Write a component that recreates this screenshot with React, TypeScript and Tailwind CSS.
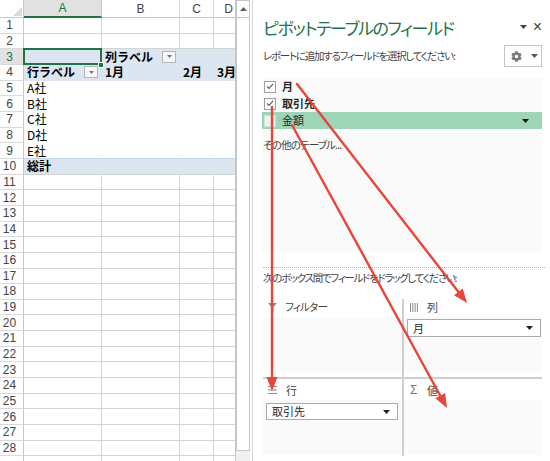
import React from "react";
import { FaCog } from "react-icons/fa";

const JP = "font-['Noto_Sans_CJK_JP','Noto_Sans',sans-serif]";

function Tri({ className = "" }: { className?: string }) {
  return (
    <svg width="7" height="4" viewBox="0 0 7 4" className={className}>
      <polygon points="0,0 7,0 3.5,4" fill="currentColor" />
    </svg>
  );
}

function FilterBtn() {
  return (
    <div className="ml-[9px] w-[14px] h-[12px] border border-[#b5b5b5] bg-[#f7f7f7] flex items-center justify-center text-[#777]">
      <svg width="5" height="3" viewBox="0 0 5 3">
        <polygon points="0,0 5,0 2.5,3" fill="currentColor" />
      </svg>
    </div>
  );
}

const colW = ["w-[78px]", "w-[78px]", "w-[34px]", "w-[30px]"];
const letters = ["A", "B", "C", "D"];

type CellDef = { text: string; bold?: boolean; btn?: boolean };

function content(r: number, c: number): CellDef | null {
  if (r === 3 && c === 1) return { text: "列ラベル", bold: true, btn: true };
  if (r === 4 && c === 0) return { text: "行ラベル", bold: true, btn: true };
  if (r === 4 && c === 1) return { text: "1月", bold: true };
  if (r === 4 && c === 2) return { text: "2月", bold: true };
  if (r === 4 && c === 3) return { text: "3月", bold: true };
  if (r >= 5 && r <= 9 && c === 0) return { text: ["A社", "B社", "C社", "D社", "E社"][r - 5] };
  if (r === 10 && c === 0) return { text: "総計", bold: true };
  return null;
}

function Sheet() {
  const rows = Array.from({ length: 28 }, (_, i) => i + 1);
  return (
    <div className="w-[236px] h-full overflow-hidden shrink-0 border-r border-[#c6c6c6] flex flex-col">
      <div className="flex h-[18px] w-[260px] shrink-0">
        <div className="w-[24px] shrink-0 border-r border-b border-[#c6c6c6] bg-white flex items-end justify-end pr-[1px] pb-[1px]">
          <svg width="9" height="9" viewBox="0 0 9 9">
            <polygon points="9,0 9,9 0,9" fill="#dadada" />
          </svg>
        </div>
        {letters.map((l, i) => (
          <div
            key={l}
            className={`${colW[i]} shrink-0 flex items-center justify-center text-[12px] font-['Liberation_Sans',sans-serif] ${
              i === 0
                ? "bg-[#e1e1e1] text-[#217346] border-b-2 border-b-[#217346] border-r border-r-[#c6c6c6]"
                : "bg-white text-[#444] border-b border-b-[#c6c6c6] border-r border-r-[#dadada]"
            }`}
          >
            {l}
          </div>
        ))}
      </div>
      {rows.map((r) => {
        const pivot = r >= 3 && r <= 10;
        const blue = r === 3 || r === 4 || r === 10;
        return (
          <div key={r} className="flex h-[15.67px] w-[260px] shrink-0">
            <div
              className={`w-[24px] shrink-0 border-b border-b-[#dadada] border-r flex items-center justify-center pr-[4px] text-[12px] font-['Liberation_Sans',sans-serif] ${
                r === 3
                  ? "bg-[#e1e1e1] text-[#217346] border-r-[#217346]"
                  : "bg-white text-[#444] border-r-[#c6c6c6]"
              }`}
            >
              {r}
            </div>
            {letters.map((l, c) => {
              const ct = content(r, c);
              const bb = pivot
                ? r === 10
                  ? "border-b-[#d4d4d4]"
                  : r === 9
                  ? "border-b-[#c3d5ea]"
                  : "border-b-transparent"
                : "border-b-[#d4d4d4]";
              const br = pivot ? "border-r-transparent" : "border-r-[#d4d4d4]";
              return (
                <div
                  key={l}
                  className={`${colW[c]} shrink-0 relative border-b border-r ${bb} ${br} ${
                    blue ? "bg-[#dce6f1]" : "bg-white"
                  } flex items-center pl-[3px] overflow-visible whitespace-nowrap text-[12px] leading-none text-black ${JP}`}
                >
                  {ct && (
                    <>
                      <span className={ct.bold ? "font-bold" : ""}>{ct.text}</span>
                      {ct.btn && <FilterBtn />}
                    </>
                  )}
                  {r === 3 && c === 0 && (
                    <>
                      <div className="absolute top-[-1px] left-[-1px] right-[-1px] bottom-[-1px] border-2 border-[#217346] z-10" />
                      <div className="absolute w-[6px] h-[6px] bg-[#217346] border border-white right-[-3px] bottom-[-4px] z-20" />
                    </>
                  )}
                </div>
              );
            })}
          </div>
        );
      })}
      <div className="flex flex-1 w-[260px]">
        <div className="w-[24px] shrink-0 border-r border-[#c6c6c6] bg-white" />
        {letters.map((l, c) => (
          <div key={l} className={`${colW[c]} shrink-0 border-r border-[#d4d4d4] bg-white`} />
        ))}
      </div>
    </div>
  );
}

function Scrollbar() {
  return (
    <div className="w-[14px] h-full shrink-0 flex flex-col bg-[#f0f0f0]">
      <div className="h-[18px] bg-white border border-[#c6c6c6] flex items-center justify-center text-[#606060]">
        <svg width="7" height="4" viewBox="0 0 7 4">
          <polygon points="0,4 7,4 3.5,0" fill="currentColor" />
        </svg>
      </div>
      <div className="h-[433px] bg-white border border-t-0 border-[#c6c6c6]" />
    </div>
  );
}

function Check({ checked, light }: { checked?: boolean; light?: boolean }) {
  return (
    <div
      className={`w-[12px] h-[12px] shrink-0 border flex items-center justify-center ${
        light ? "bg-[#e9f5ee] border-[#cbe6d6]" : "bg-white border-[#a0a0a0]"
      }`}
    >
      {checked && (
        <svg width="8" height="7" viewBox="0 0 8 7">
          <polyline points="1,3.5 3,5.5 7,1" fill="none" stroke="#666" strokeWidth="1.2" />
        </svg>
      )}
    </div>
  );
}

function Dropdown({ label, h }: { label: string; h: string }) {
  return (
    <div className={`${h} bg-white border border-[#ababab] flex items-center justify-between pl-[5px] pr-[7px]`}>
      <span className="text-[11px] text-[#262626]">{label}</span>
      <Tri className="text-[#222]" />
    </div>
  );
}

function Panel() {
  const palt = "[font-feature-settings:'palt']";
  return (
    <div className={`flex-1 h-full border-l border-[#d4d4d4] bg-white pl-[10px] pr-[8px] flex flex-col text-[#444] ${JP} ${palt}`}>
      <div className="mt-[14px] h-[26px] flex items-center justify-between">
        <div className="text-[17px] text-[#217346] leading-none whitespace-nowrap tracking-[-1.4px]">ピボットテーブルのフィールド</div>
        <div className="flex items-center gap-[6px] text-[#444]">
          <Tri />
          <span className="text-[16px] leading-none font-['Liberation_Sans',sans-serif]">×</span>
        </div>
      </div>
      <div className="mt-[5px] h-[22px] flex items-center justify-between">
        <div className="text-[10.5px] leading-none whitespace-nowrap tracking-[-1.25px]">レポートに追加するフィールドを選択してください:</div>
        <div className="w-[38px] h-[22px] border border-[#c6c6c6] flex items-center justify-center gap-[9px] pl-[2px]">
          <FaCog className="text-[#7a7a7a]" size={11} />
          <Tri className="text-[#555]" />
        </div>
      </div>
      <div className="mt-[11px] h-[174px] bg-[#fafafa] -ml-[1px] flex flex-col">
        <div className="h-[17px] flex items-center pl-[2px] gap-[6px]">
          <Check checked />
          <span className="text-[11px] font-bold text-[#262626]">月</span>
        </div>
        <div className="h-[17px] flex items-center pl-[2px] gap-[6px]">
          <Check checked />
          <span className="text-[11px] font-bold text-[#262626]">取引先</span>
        </div>
        <div className="h-[17px] flex items-center pl-[2px] gap-[6px] bg-[#9fd5b7]">
          <Check light />
          <span className="text-[11px] text-[#262626] flex-1">金額</span>
          <Tri className="text-[#111] mr-[13px]" />
        </div>
        <div className="mt-[8px] h-[16px] flex items-center pl-[1px] text-[10.5px] whitespace-nowrap tracking-[-0.8px]">その他のテーブル...</div>
      </div>
      <div className="mt-[15px] border-t border-dotted border-[#b0b0b0] -mr-[3px]" />
      <div className="mt-[2px] h-[16px] flex items-center text-[10.5px] whitespace-nowrap tracking-[-1.3px]">
        次のボックス間でフィールドをドラッグしてください:
      </div>
      <div className="mt-[13px] grid grid-cols-[139px_2px_1fr] grid-rows-[78px_2px_77px]">
        {/* filter */}
        <div className="flex flex-col">
          <div className="h-[16px] flex items-center pl-[5px]">
            <svg width="9" height="9" viewBox="0 0 9 9">
              <polygon points="0,0 9,0 5.5,4 5.5,9 3.5,8 3.5,4" fill="#8a8a8a" />
            </svg>
            <span className="ml-[8px] text-[10.5px] tracking-[-0.8px]">フィルター</span>
          </div>
          <div className="mt-[3px] h-[54px] bg-[#fafafa]" />
        </div>
        <div className="row-span-3 bg-[#cfcfcf]" />
        {/* columns */}
        <div className="flex flex-col">
          <div className="h-[16px] flex items-center pl-[6px]">
            <svg width="8" height="9" viewBox="0 0 8 9">
              <rect x="0" y="0" width="1" height="9" fill="#8a8a8a" />
              <rect x="2.3" y="0" width="1" height="9" fill="#8a8a8a" />
              <rect x="4.6" y="0" width="1" height="9" fill="#8a8a8a" />
              <rect x="6.9" y="0" width="1" height="9" fill="#8a8a8a" />
            </svg>
            <span className="ml-[9px] text-[11px]">列</span>
          </div>
          <div className="mt-[2px] h-[55px] bg-[#fafafa] pt-[2px] pl-[3px] pr-[1px]">
            <Dropdown label="月" h="h-[18px]" />
          </div>
        </div>
        <div className="bg-[#cfcfcf]" />
        <div className="bg-[#cfcfcf]" />
        {/* rows */}
        <div className="flex flex-col">
          <div className="mt-[3px] h-[16px] flex items-center pl-[5px]">
            <svg width="9" height="8" viewBox="0 0 9 8">
              <rect x="0" y="0" width="9" height="1" fill="#8a8a8a" />
              <rect x="0" y="3.5" width="9" height="1" fill="#8a8a8a" />
              <rect x="0" y="7" width="9" height="1" fill="#8a8a8a" />
            </svg>
            <span className="ml-[9px] text-[11px]">行</span>
          </div>
          <div className="mt-[2px] h-[55px] bg-[#fafafa] pt-[3px] pl-[3px] pr-[4px]">
            <Dropdown label="取引先" h="h-[17px]" />
          </div>
        </div>
        {/* values */}
        <div className="flex flex-col">
          <div className="mt-[3px] h-[16px] flex items-center pl-[6px]">
            <span className="w-[8px] text-[12px] text-[#777] font-['Liberation_Sans',sans-serif] leading-none">Σ</span>
            <span className="ml-[9px] text-[11px]">値</span>
          </div>
          <div className="mt-[2px] h-[55px] bg-[#fafafa]" />
        </div>
      </div>
    </div>
  );
}

function Arrow({ x1, y1, x2, y2 }: { x1: number; y1: number; x2: number; y2: number }) {
  const dx = x2 - x1;
  const dy = y2 - y1;
  const len = Math.hypot(dx, dy);
  const ux = dx / len;
  const uy = dy / len;
  const L = 14;
  const W = 5.5;
  const bx = x2 - ux * L;
  const by = y2 - uy * L;
  const nx = -uy;
  const ny = ux;
  return (
    <g>
      <line x1={x1} y1={y1} x2={bx + ux * 2} y2={by + uy * 2} stroke="#e8463b" strokeWidth="2.4" strokeLinecap="round" />
      <polygon
        points={`${x2},${y2} ${bx + nx * W},${by + ny * W} ${bx - nx * W},${by - ny * W}`}
        fill="#e8463b"
      />
    </g>
  );
}

export default function App() {
  return (
    <div className={`relative w-[550px] h-[461px] overflow-hidden bg-white flex ${JP}`}>
      <Sheet />
      <Scrollbar />
      <div className="w-[2px] shrink-0" />
      <Panel />
      <svg className="absolute inset-0 pointer-events-none" width="550" height="461" viewBox="0 0 550 461">
        <Arrow x1={297} y1={84} x2={467} y2={303} />
        <Arrow x1={272} y1={107} x2={272} y2={391} />
        <Arrow x1={292} y1={125} x2={447} y2={408} />
      </svg>
    </div>
  );
}
